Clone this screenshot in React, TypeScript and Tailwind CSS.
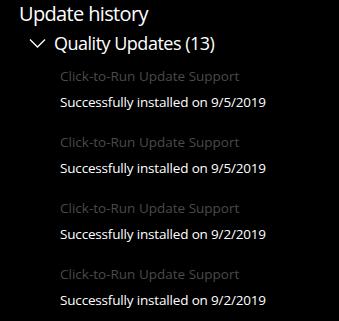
import React from "react";

const items = [
  "9/5/2019",
  "9/5/2019",
  "9/2/2019",
  "9/2/2019",
];

export default function App() {
  return (
    <div
      className="w-[339px] h-[321px] bg-black text-white overflow-hidden"
      style={{ fontFamily: '"Open Sans", "Noto Sans", sans-serif' }}
    >
      <div className="pl-[19px] text-[20px] leading-[28px] tracking-[-0.65px]">
        Update history
      </div>
      <div className="flex items-center pl-[29px] h-[30px]">
        <svg width="17" height="10" viewBox="0 0 17 10" className="mr-[8px]">
          <path d="M1 1.5 L8.5 9 L16 1.5" fill="none" stroke="white" strokeWidth="1.3" />
        </svg>
        <span className="text-[18px] leading-[28px] tracking-[-0.5px]">Quality Updates (13)</span>
      </div>
      <div className="flex flex-col pl-[60px] pt-[5px] gap-[14px]">
        {items.map((d, i) => (
          <div key={i} className="flex flex-col">
            <div className="text-[13.5px] leading-[26px] text-[#4a4a4a]">
              Click-to-Run Update Support
            </div>
            <div className="text-[13.5px] leading-[26px] text-white tracking-[-0.17px]">
              Successfully installed on {d}
            </div>
          </div>
        ))}
      </div>
    </div>
  );
}
